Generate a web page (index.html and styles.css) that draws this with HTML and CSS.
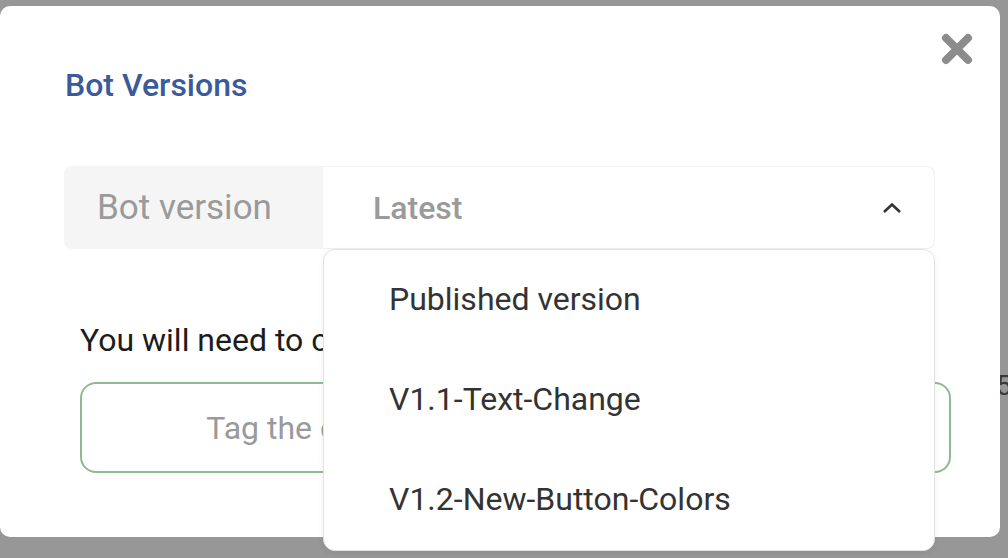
FILE: index.html
```html
<!DOCTYPE html>
<html>
<head>
<meta charset="utf-8">
<link rel="stylesheet" href="styles.css">
</head>
<body>
<div class="page">
  <div class="modal">
    <button class="close" aria-label="Close">
      <svg width="32" height="32" viewBox="0 0 32 32"><path d="M5 5 L27 27 M27 5 L5 27" stroke="#8c8c8c" stroke-width="8" stroke-linecap="round" fill="none"/></svg>
    </button>
    <h2 class="title">Bot Versions</h2>
    <div class="group">
      <div class="addon">Bot version</div>
      <div class="select-wrap">
        <div class="select">
          <span class="value">Latest</span>
          <svg class="chev" width="20" height="12" viewBox="0 0 20 12"><path d="M2 10 L10 2.5 L18 10" stroke="#333" stroke-width="2.6" fill="none"/></svg>
        </div>
        <ul class="menu">
          <li class="item">Published version</li>
          <li class="item">V1.1-Text-Change</li>
          <li class="item">V1.2-New-Button-Colors</li>
        </ul>
      </div>
    </div>
    <div class="section">
      <p class="note">You will need to create a tag for the current bot version first.</p>
      <button class="tag">Tag the current bot version with a new name</button>
    </div>
  </div>
  <div class="behind">5</div>
</div>
</body>
</html>
```
FILE: styles.css
```css
html, body {
  margin: 0;
  padding: 0;
}
body {
  width: 1008px;
  height: 558px;
  overflow: hidden;
  background: #979797;
  font-family: Roboto, "Liberation Sans", Arial, sans-serif;
}
.page {
  display: flex;
  align-items: flex-start;
}
.modal {
  position: relative;
  flex: 0 0 auto;
  box-sizing: border-box;
  width: 1000px;
  height: 531px;
  margin-top: 6px;
  background: #fff;
  border-radius: 10px;
  padding: 61px 65px 0 64px;
  display: flex;
  flex-direction: column;
  z-index: 1;
}
.close {
  position: absolute;
  top: 27px;
  right: 27px;
  width: 32px;
  height: 32px;
  padding: 0;
  border: 0;
  background: none;
  display: flex;
}
.title {
  margin: 0 0 0 1px;
  font-size: 32px;
  line-height: 36px;
  font-weight: 500;
  color: #3b5a99;
}
.group {
  margin-top: 63px;
  height: 83px;
  display: flex;
}
.addon {
  box-sizing: border-box;
  width: 259px;
  background: #f5f5f5;
  border-radius: 8px 0 0 8px;
  color: #9a9a9a;
  font-size: 35px;
  display: flex;
  align-items: center;
  padding-left: 33px;
}
.select-wrap {
  position: relative;
  flex: 1;
}
.select {
  box-sizing: border-box;
  height: 100%;
  border: 1px solid #f0f0f0;
  border-left: 0;
  border-radius: 0 8px 8px 0;
  display: flex;
  align-items: center;
  justify-content: space-between;
  padding: 0 32px 0 50px;
}
.value {
  font-size: 32px;
  font-weight: 500;
  color: #9a9a9a;
}
.chev {
  display: block;
}
.menu {
  position: absolute;
  top: 100%;
  left: 0;
  right: 0;
  margin: 0;
  padding: 0;
  list-style: none;
  background: #fff;
  border: 1px solid #e2e2e2;
  border-radius: 12px;
  box-shadow: 0 2px 6px rgba(0,0,0,0.06);
  z-index: 2;
}
.item {
  height: 100px;
  display: flex;
  align-items: center;
  padding: 0 0 2px 65px;
  box-sizing: border-box;
  font-size: 32px;
  color: #333;
}
.section {
  margin: 71px -16px 0 16px;
  display: flex;
  flex-direction: column;
}
.note {
  margin: 0;
  font-size: 32px;
  line-height: 40px;
  color: #1c1c1c;
  white-space: nowrap;
}
.tag {
  margin-top: 22px;
  height: 91px;
  padding: 0 0 0 10px;
  border: 2px solid #8fba8f;
  border-radius: 16px;
  background: #fff;
  font-family: inherit;
  font-size: 32px;
  color: #9a9a9a;
  white-space: nowrap;
}
.behind {
  margin: 368px 0 0 -4px;
  font-size: 28px;
  line-height: 36px;
  color: #3a3a3a;
}
```
